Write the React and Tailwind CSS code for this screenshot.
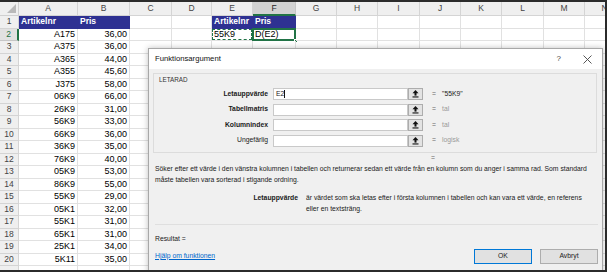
import React from "react";

const data = [
  ["A175", "36,00"],
  ["A375", "36,00"],
  ["A365", "44,00"],
  ["A355", "45,60"],
  ["J375", "58,00"],
  ["06K9", "66,00"],
  ["26K9", "31,00"],
  ["56K9", "33,00"],
  ["66K9", "36,00"],
  ["36K9", "35,00"],
  ["76K9", "40,00"],
  ["05K9", "53,00"],
  ["86K9", "55,00"],
  ["55K9", "29,00"],
  ["05K1", "32,00"],
  ["55K1", "31,00"],
  ["65K1", "31,00"],
  ["25K1", "34,00"],
  ["5K11", "35,00"],
];

const letters = ["A", "B", "C", "D", "E", "F", "G", "H", "I", "J", "K", "L", "M", "N"];

function CollapseIcon() {
  return (
    <svg width="7" height="8" viewBox="0 0 7 8">
      <polygon points="3.5,0 6.5,3.2 0.5,3.2" fill="#111" />
      <rect x="2.5" y="3" width="2" height="2.6" fill="#111" />
      <rect x="0.5" y="6.4" width="6" height="1.1" fill="#111" />
    </svg>
  );
}

function Cell({ r, c }) {
  const base = "border-r border-b border-[#e1e1e1] flex items-center overflow-hidden whitespace-nowrap relative";
  if (r === 1 && (c === 0 || c === 1 || c === 4 || c === 5)) {
    const txt = c === 0 || c === 4 ? "Artikelnr" : "Pris";
    return (
      <div className="bg-[#2e3192] border-r border-b border-[#2e3192] flex items-center px-[2px] text-white font-bold text-[8.5px] overflow-hidden whitespace-nowrap">
        {txt}
      </div>
    );
  }
  if (r >= 2 && r <= 20 && (c === 0 || c === 1)) {
    return (
      <div className={base + " justify-end px-[2px] text-[9px] text-black"}>
        {data[r - 2][c]}
      </div>
    );
  }
  if (r === 2 && c === 4) {
    return (
      <div className={base + " px-[2px] text-[9px] text-black"}>
        55K9
        <div className="absolute inset-[0px] border border-dashed border-[#217346]" />
      </div>
    );
  }
  if (r === 2 && c === 5) {
    return (
      <div className={base + " px-[2px] text-[9px] text-black overflow-visible"}>
        D(E2)
        <div className="absolute left-[-1px] top-[-1px] right-[-1px] bottom-[-1px] border-2 border-[#217346]" />
        <div className="absolute right-[-3px] bottom-[-3px] w-[4px] h-[4px] bg-[#217346] border border-white" />
      </div>
    );
  }
  return <div className={base} />;
}

export default function App() {
  const rows = [];
  for (let r = 1; r <= 21; r++) rows.push(r);
  return (
    <div className="w-[607px] h-[272px] relative overflow-hidden bg-white border-t-2 border-r-2 border-b-2 border-[#2b2b2b] font-['Liberation_Sans',Arial,sans-serif]">
      {/* Spreadsheet grid */}
      <div className="grid grid-cols-[19px_59px_52px_42px_40px_41px_43px_41px_41px_42px_41px_41px_42px_41px_40px] grid-rows-[14px_repeat(21,12.5px)]">
        <div className="bg-[#efefef] border-r border-b border-[#d0d0d0] relative">
          <svg className="absolute right-[2px] bottom-[2px]" width="9" height="9" viewBox="0 0 9 9">
            <polygon points="9,0 9,9 0,9" fill="#b9b9b9" />
          </svg>
        </div>
        {letters.map((l) => (
          <div
            key={l}
            className={
              l === "F"
                ? "bg-[#d2d2d2] border-r border-b-2 border-r-[#c6c6c6] border-b-[#217346] flex items-center justify-center text-[8.5px] text-[#262626]"
                : "bg-[#efefef] border-r border-b border-[#d4d4d4] flex items-center justify-center text-[8.5px] text-[#444]"
            }
          >
            {l}
          </div>
        ))}
        {rows.map((r) => (
          <React.Fragment key={r}>
            <div
              className={
                r === 2
                  ? "bg-[#e1e1e1] border-r-2 border-b border-r-[#217346] border-b-[#c6c6c6] flex items-center justify-center text-[8.5px] text-[#217346]"
                  : "bg-[#efefef] border-r border-b border-[#d4d4d4] flex items-center justify-center text-[8.5px] text-[#444]"
              }
            >
              {r <= 20 ? r : ""}
            </div>
            {letters.map((l, c) => (
              <Cell key={l} r={r} c={c} />
            ))}
          </React.Fragment>
        ))}
      </div>

      {/* Dialog */}
      <div className="absolute left-[148px] top-[46px] w-[455px] h-[240px] bg-[#f0f0f0] border border-[#a8a8a8] shadow-[0_0_6px_rgba(0,0,0,0.25)] text-[6.8px] text-[#1a1a1a]">
        <div className="h-[20px] bg-white flex items-center pl-[6px] pr-[10px]">
          <span className="text-[7.7px] text-[#111]">Funktionsargument</span>
          <span className="ml-auto text-[8px] text-[#444] mr-[22px]">?</span>
          <svg width="9" height="9" viewBox="0 0 9 9">
            <path d="M0.5 0.5 L8.5 8.5 M8.5 0.5 L0.5 8.5" stroke="#444" strokeWidth="0.9" />
          </svg>
        </div>

        {/* Group box */}
        <div className="mt-[4px] ml-[4px] mr-[5px] border border-[#dcdcdc] pt-[1px] pb-[5px]">
          <div className="h-[9px] leading-[9px] pl-[5px] text-[6.3px] text-[#333]">LETARAD</div>
          <div className="mt-[4px] flex flex-col gap-[3.5px]">
            {[
              ["Letauppvärde", true, '"55K9"', "text-[#1a1a1a]", "E2"],
              ["Tabellmatris", true, "tal", "text-[#9a9a9a]", ""],
              ["Kolumnindex", true, "tal", "text-[#9a9a9a]", ""],
              ["Ungefärlig", false, "logisk", "text-[#9a9a9a]", ""],
            ].map(([lab, bold, val, vc, inp]) => (
              <div key={lab} className="flex items-center h-[12px]">
                <div className={"w-[119px] pr-[5px] text-right " + (bold ? "font-bold" : "")}>{lab}</div>
                <div className="w-[135px] h-[12px] bg-white border border-[#c9c9c9] flex items-center pl-[2px]">
                  {inp && (
                    <>
                      <span>{inp}</span>
                      <span className="w-[1px] h-[8px] bg-[#111]" />
                    </>
                  )}
                </div>
                <div className="w-[15px] h-[12px] bg-[#e3e3e3] border border-[#adadad] flex items-center justify-center">
                  <CollapseIcon />
                </div>
                <span className="ml-[9px] w-[10px] text-[#666]">=</span>
                <span className={vc}>{val}</span>
              </div>
            ))}
          </div>
        </div>

        <div className="h-[10px] leading-[10px] pl-[282px] text-[#666]">=</div>
        <div className="pl-[6px] pr-[4px] leading-[11px]">
          Söker efter ett värde i den vänstra kolumnen i tabellen och returnerar sedan ett värde från en kolumn som du anger i samma rad. Som standard
          <br />
          måste tabellen vara sorterad i stigande ordning.
        </div>
        <div className="mt-[7px] flex leading-[11px]">
          <div className="w-[157px] pr-[8px] text-right font-bold">Letauppvärde</div>
          <div className="w-[288px]">
            är värdet som ska letas efter i första kolumnen i tabellen och kan vara ett värde, en referens eller en textsträng.
          </div>
        </div>

        <div className="mt-[10px] ml-[6px] mr-[4px] border-t border-[#dfdfdf]" />
        <div className="pl-[6px] mt-[9px] leading-[10px]">Resultat =</div>
        <div className="mt-[5px] flex items-center pl-[6px] pr-[4px]">
          <span className="text-[#0066cc] underline">Hjälp om funktionen</span>
          <div className="ml-auto flex gap-[8px]">
            <div className="w-[58px] h-[15px] bg-[#e1e1e1] border border-[#0078d7] flex items-center justify-center">OK</div>
            <div className="w-[58px] h-[15px] bg-[#e1e1e1] border border-[#adadad] flex items-center justify-center">Avbryt</div>
          </div>
        </div>
      </div>
    </div>
  );
}
